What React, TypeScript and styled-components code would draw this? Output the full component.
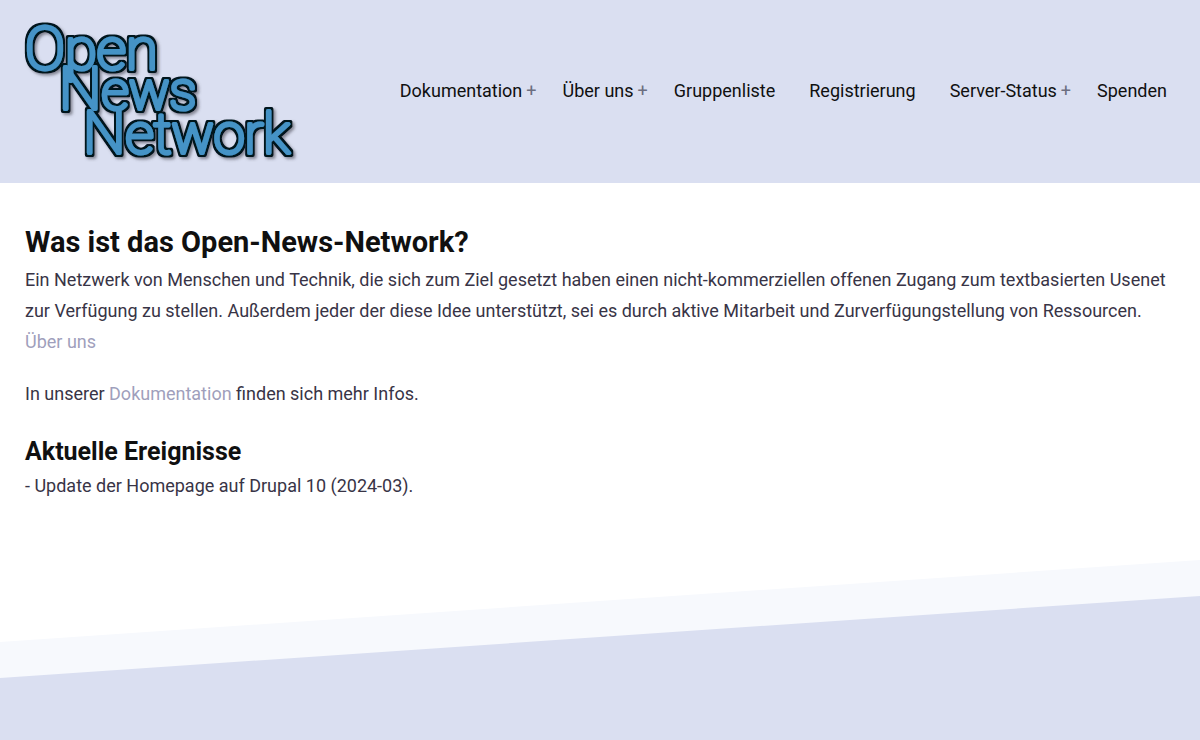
import React from "react";
import styled, { createGlobalStyle } from "styled-components";

const GlobalStyle = createGlobalStyle`
  *, *::before, *::after { box-sizing: border-box; }
  body {
    margin: 0;
    background: #ffffff;
    color: #383446;
    font-family: Roboto, "Liberation Sans", sans-serif;
    font-size: 18px;
    line-height: 31px;
  }
`;

const Page = styled.div`
  display: flex;
  flex-direction: column;
  min-height: 100vh;
`;

const Header = styled.header`
  display: flex;
  align-items: center;
  justify-content: space-between;
  gap: 24px;
  padding: 18px 25px 20px;
  background: #dadff1;
`;

const LogoLink = styled.a`
  display: block;
  flex: none;
  text-decoration: none;
`;

const LogoSvg = styled.svg`
  display: block;
  overflow: visible;
`;

const LogoLine = styled.text<{ $size: number }>`
  font-family: Roboto, sans-serif;
  font-size: ${(p) => p.$size}px;
  font-weight: 100;
`;

const LogoInitial = styled.tspan`
  font-size: 60px;
`;

const NavList = styled.ul`
  display: flex;
  flex-wrap: wrap;
  justify-content: flex-end;
  margin: 0;
  padding: 0;
  list-style: none;
`;

const NavItem = styled.li<{ $expandable?: boolean }>`
  display: flex;
  align-items: center;
  padding-right: ${(p) => (p.$expandable ? 26 : 34)}px;

  &:last-child { padding-right: 8px; }
`;

const NavLink = styled.a`
  color: #101010;
  text-decoration: none;
  white-space: nowrap;
`;

const Toggle = styled.button`
  margin: 0 0 0 4px;
  padding: 0;
  border: 0;
  background: none;
  color: #6c6e80;
  font: inherit;
  cursor: pointer;
`;

const Main = styled.main`
  padding: 41px 25px 59px;
`;

const Title = styled.h1`
  margin: 0 0 4px;
  color: #101010;
  font-size: 29px;
  font-weight: 700;
  line-height: 36px;
`;

const Subtitle = styled.h2`
  margin: 0 0 2px;
  color: #101010;
  font-size: 25px;
  font-weight: 700;
  line-height: 32px;
`;

const Paragraph = styled.p`
  margin: 0 0 21px;
`;

const Block = styled.section`
  margin-bottom: 27px;

  &:last-child, & > p:last-child { margin-bottom: 0; }
`;

const TextLink = styled.a`
  color: #9f9fbc;
  text-decoration: none;
`;

const SlopedBand = styled.div<{ $tone: string }>`
  display: flex;
  flex: 1;
  flex-direction: column;
  min-height: 144px;
  background: ${(p) => p.$tone};
  clip-path: polygon(0 82px, 100% 0, 100% 100%, 0 100%);
`;

const Footer = styled.footer`
  display: flex;
  flex: 1;
  flex-direction: column;
`;

const FooterInner = styled.div`
  display: flex;
  flex: 1;
  flex-direction: column;
  padding-top: 36px;
`;

const menu = [
  { label: "Dokumentation", expandable: true },
  { label: "Über uns", expandable: true },
  { label: "Gruppenliste" },
  { label: "Registrierung" },
  { label: "Server-Status", expandable: true },
  { label: "Spenden" },
];

function Logo() {
  return (
    <LogoSvg width="275" height="145" viewBox="0 0 275 145" role="img" aria-label="Open News Network">
      <defs>
        <filter id="outline" x="-10%" y="-10%" width="120%" height="120%">
          <feMorphology in="SourceAlpha" operator="dilate" radius="2" result="wide" />
          <feFlood floodColor="#05121d" />
          <feComposite in2="wide" operator="in" result="edge" />
          <feGaussianBlur in="wide" stdDeviation="1.5" result="soft" />
          <feOffset in="soft" dx="2" dy="2" result="moved" />
          <feFlood floodColor="#4a4a55" floodOpacity="0.6" />
          <feComposite in2="moved" operator="in" result="shade" />
          <feMerge>
            <feMergeNode in="shade" />
            <feMergeNode in="edge" />
            <feMergeNode in="SourceGraphic" />
          </feMerge>
        </filter>
      </defs>
      <g fill="#4593c6" stroke="#4593c6" strokeWidth="4" strokeLinejoin="round" filter="url(#outline)">
        <LogoLine $size={58} x="0" y="51"><LogoInitial>O</LogoInitial>pen</LogoLine>
        <LogoLine $size={54} x="34" y="91"><LogoInitial>N</LogoInitial>ews</LogoLine>
        <LogoLine $size={56} x="58" y="135"><LogoInitial>N</LogoInitial>etwork</LogoLine>
      </g>
    </LogoSvg>
  );
}

export default function App() {
  return (
    <Page>
      <GlobalStyle />
      <Header>
        <LogoLink href="#start"><Logo /></LogoLink>
        <nav aria-label="Hauptnavigation">
          <NavList>
            {menu.map((item) => (
              <NavItem key={item.label} $expandable={item.expandable}>
                <NavLink href="#">{item.label}</NavLink>
                {item.expandable && <Toggle type="button" aria-expanded={false}>+</Toggle>}
              </NavItem>
            ))}
          </NavList>
        </nav>
      </Header>
      <Main>
        <Block>
          <Title>Was ist das Open-News-Network?</Title>
          <Paragraph>
            Ein Netzwerk von Menschen und Technik, die sich zum Ziel gesetzt haben einen nicht-kommerziellen offenen
            Zugang zum textbasierten Usenet zur Verfügung zu stellen. Außerdem jeder der diese Idee unterstützt, sei es
            durch aktive Mitarbeit und Zurverfügungstellung von Ressourcen.
            <br />
            <TextLink href="#ueber-uns">Über uns</TextLink>
          </Paragraph>
          <Paragraph>
            In unserer <TextLink href="#dokumentation">Dokumentation</TextLink> finden sich mehr Infos.
          </Paragraph>
        </Block>
        <Block>
          <Subtitle>Aktuelle Ereignisse</Subtitle>
          <Paragraph>- Update der Homepage auf Drupal 10 (2024-03).</Paragraph>
        </Block>
      </Main>
      <Footer>
        <SlopedBand $tone="#f7f9fd">
          <FooterInner>
            <SlopedBand $tone="#dadff1" />
          </FooterInner>
        </SlopedBand>
      </Footer>
    </Page>
  );
}
